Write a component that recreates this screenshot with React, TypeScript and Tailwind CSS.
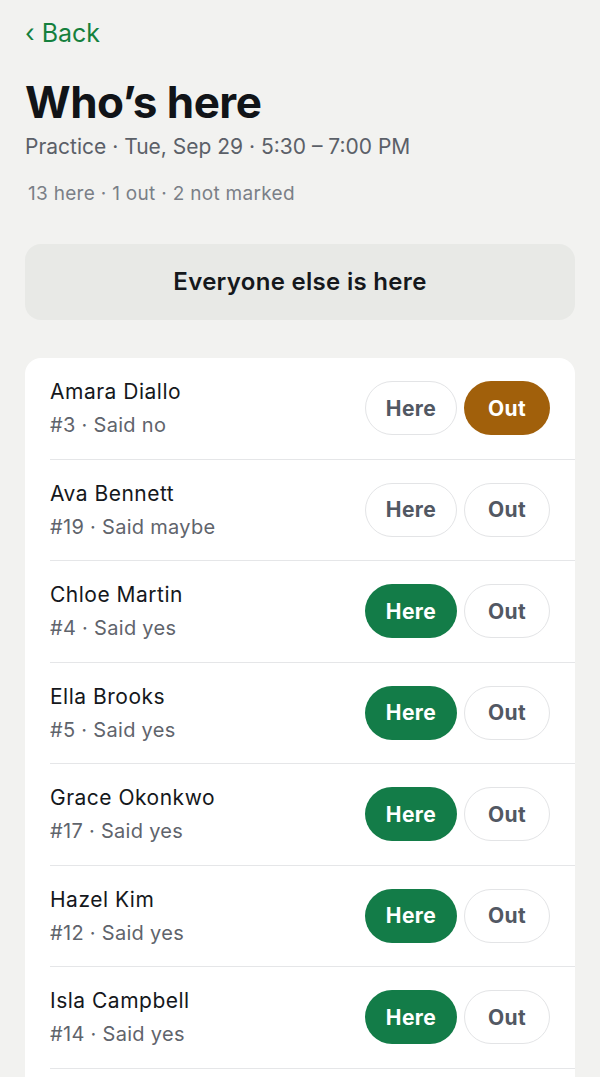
import React from "react";

type P = { name: string; sub: string; state: "here" | "out" | "none" };

const players: P[] = [
  { name: "Amara Diallo", sub: "#3 · Said no", state: "out" },
  { name: "Ava Bennett", sub: "#19 · Said maybe", state: "none" },
  { name: "Chloe Martin", sub: "#4 · Said yes", state: "here" },
  { name: "Ella Brooks", sub: "#5 · Said yes", state: "here" },
  { name: "Grace Okonkwo", sub: "#17 · Said yes", state: "here" },
  { name: "Hazel Kim", sub: "#12 · Said yes", state: "here" },
  { name: "Isla Campbell", sub: "#14 · Said yes", state: "here" },
  { name: "Maya Torres", sub: "#8 · Said yes", state: "here" },
];

export default function App() {
  return (
    <div
      className="min-h-[1077px] bg-[#f2f2f0] px-[25px] pt-[17px] pb-10"
      style={{ fontFamily: "Inter, 'Noto Sans', sans-serif" }}
    >
      <div className="text-[25px] leading-[32px] text-[#15803d]">‹ Back</div>
      <h1 className="mt-[27px] text-[44px] leading-[52px] font-bold tracking-[-0.5px] text-[#111418]">
        Who’s here
      </h1>
      <div className="mt-[5px] text-[21px] leading-[28px] text-[#5b6068]">
        Practice · Tue, Sep 29 · 5:30 – 7:00 PM
      </div>
      <div className="mt-[20px] pl-[3px] text-[19px] leading-[26px] tracking-[0.3px] text-[#7a7f87]">
        13 here · 1 out · 2 not marked
      </div>
      <div className="mt-[37px] h-[76px] rounded-[16px] bg-[#e8e9e6] flex items-center justify-center text-[24px] font-semibold tracking-[0.3px] text-[#15181c]">
        Everyone else is here
      </div>
      <div className="mt-[38px] rounded-[16px] bg-white overflow-hidden">
        {players.map((p) => (
          <div
            key={p.name}
            className="ml-[25px] h-[101.5px] border-b border-[#e5e6e8] pr-[25px] flex items-center justify-between"
          >
            <div className="flex flex-col gap-[6px]">
              <div className="text-[21px] leading-[28px] tracking-[0.5px] text-[#15181c]">{p.name}</div>
              <div className="text-[20px] leading-[26px] tracking-[0.3px] text-[#5f646c]">{p.sub}</div>
            </div>
            <div className="flex gap-[7px]">
              <button
                className={
                  p.state === "here"
                    ? "w-[92px] h-[54px] rounded-full bg-[#137c48] text-white text-[21px] font-bold tracking-[0.4px]"
                    : "w-[92px] h-[54px] rounded-full bg-white border border-[#e3e4e6] text-[#525863] text-[21px] font-bold tracking-[0.4px]"
                }
              >
                Here
              </button>
              <button
                className={
                  p.state === "out"
                    ? "w-[86px] h-[54px] rounded-full bg-[#a1600b] text-white text-[21px] font-bold tracking-[0.4px]"
                    : "w-[86px] h-[54px] rounded-full bg-white border border-[#e3e4e6] text-[#525863] text-[21px] font-bold tracking-[0.4px]"
                }
              >
                Out
              </button>
            </div>
          </div>
        ))}
      </div>
    </div>
  );
}
